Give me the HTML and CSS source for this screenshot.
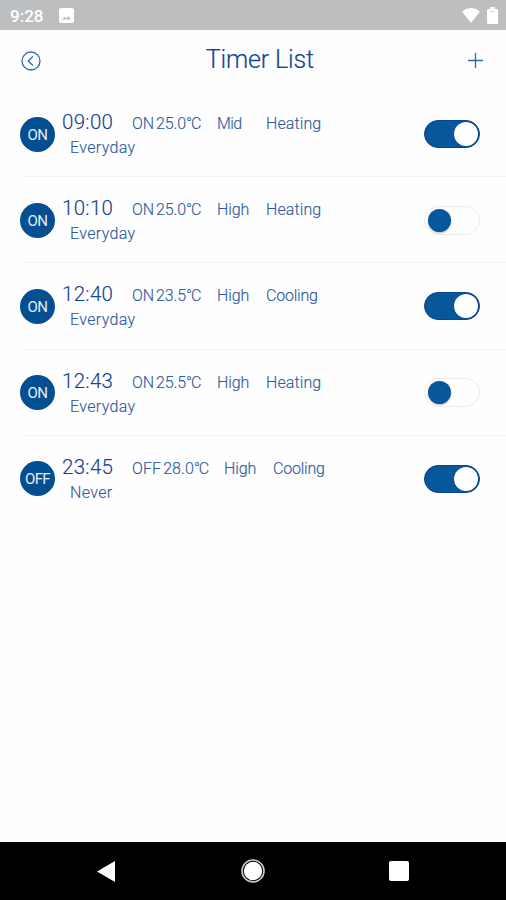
FILE: index.html
```html
<!DOCTYPE html>
<html lang="en">
<head>
<meta charset="utf-8">
<title>Timer List</title>
<link rel="stylesheet" href="styles.css">
</head>
<body>
<div class="status">
  <span class="clock">9:28</span>
  <svg class="photo" width="15" height="15" viewBox="0 0 15 15"><rect width="15" height="15" rx="2" fill="#fff"/><path d="M3 11.5L5.5 8.8L7.3 10.5L9.6 8L12.3 11.5Z" fill="#bdbec0"/></svg>
  <svg class="wifi" width="18" height="15" viewBox="0 0 18 15"><path d="M0 3.4Q9-3.3 18 3.4L9 15Z" fill="#fff"/></svg>
  <svg class="battery" width="11" height="17" viewBox="0 0 11 17"><path d="M3.2 0H7.8V2H9.5Q11 2 11 3.5V15.5Q11 17 9.5 17H1.5Q0 17 0 15.5V3.5Q0 2 1.5 2H3.2Z" fill="#fff"/><path d="M3 4.5H8" stroke="#d8d8d9"/></svg>
</div>
<header class="header">
  <svg width="20" height="20" viewBox="0 0 20 20" fill="none" stroke="#2e69a9" stroke-width="1.3"><circle cx="10" cy="10" r="9"/><path d="M12 5.6L7.2 10L12 14.4"/></svg>
  <h1 class="title">Timer List</h1>
  <svg width="15" height="15" viewBox="0 0 15 15" stroke="#2e69a9" stroke-width="1.3"><path d="M0 7.5H15M7.5 0V15"/></svg>
</header>
<main class="list">
  <div class="row"><span class="badge">ON</span><div class="info"><div class="line"><span class="time">09:00</span><span class="temp">ON<i></i>25.0<span class="unit">°C</span></span><span class="fan mid">Mid</span><span class="mode">Heating</span></div><div class="repeat">Everyday</div></div><span class="switch on"></span></div>
  <div class="row"><span class="badge">ON</span><div class="info"><div class="line"><span class="time">10:10</span><span class="temp">ON<i></i>25.0<span class="unit">°C</span></span><span class="fan">High</span><span class="mode">Heating</span></div><div class="repeat">Everyday</div></div><span class="switch"></span></div>
  <div class="row"><span class="badge">ON</span><div class="info"><div class="line"><span class="time">12:40</span><span class="temp">ON<i></i>23.5<span class="unit">°C</span></span><span class="fan">High</span><span class="mode cool">Cooling</span></div><div class="repeat">Everyday</div></div><span class="switch on"></span></div>
  <div class="row"><span class="badge">ON</span><div class="info"><div class="line"><span class="time">12:43</span><span class="temp">ON<i></i>25.5<span class="unit">°C</span></span><span class="fan">High</span><span class="mode">Heating</span></div><div class="repeat">Everyday</div></div><span class="switch"></span></div>
  <div class="row last"><span class="badge">OFF</span><div class="info"><div class="line"><span class="time">23:45</span><span class="temp wide">OFF<i></i>28.0<span class="unit">°C</span></span><span class="fan">High</span><span class="mode cool">Cooling</span></div><div class="repeat">Never</div></div><span class="switch on"></span></div>
</main>
<nav class="nav">
  <svg width="18" height="21" viewBox="0 0 18 21"><path d="M18 0V21L0 10.5Z" fill="#fff"/></svg>
  <svg width="24" height="24" viewBox="0 0 24 24"><circle cx="12" cy="12" r="11" fill="none" stroke="#ccc" stroke-width="1.6"/><circle cx="12" cy="12" r="9.2" fill="#fff"/></svg>
  <svg width="20" height="20" viewBox="0 0 20 20"><rect width="20" height="20" rx="2" fill="#fff"/></svg>
</nav>
</body>
</html>
```

FILE: styles.css
```css
* { box-sizing: border-box; }
body {
  margin: 0;
  height: 900px;
  display: flex;
  flex-direction: column;
  overflow: hidden;
  background: #fefefe;
  color: #2f5ba1;
  font-family: Roboto, "Noto Sans", sans-serif;
}
svg { display: block; flex: none; }
.status {
  height: 30px;
  flex: none;
  display: flex;
  align-items: center;
  padding: 0 8px 0 10px;
  background: #bdbec0;
}
.clock { width: 49px; padding-top: 1px; color: #fff; font-size: 17px; font-weight: 500; }
.photo { margin-top: 1px; }
.wifi { margin-left: auto; }
.battery { margin-left: 7px; }
.header {
  height: 61px;
  flex: none;
  display: flex;
  align-items: center;
  justify-content: space-between;
  padding: 0 22.5px 0 21px;
}
.title {
  margin: 0;
  padding: 0 0 2px 10px;
  font-size: 25px;
  font-weight: 300;
  line-height: 30px;
  letter-spacing: -0.15px;
  color: #164497;
  -webkit-text-stroke: 0.2px #164497;
}
.header svg:last-child { margin-bottom: 1px; }
.list { flex: 1; }
.row {
  height: 86.2px;
  display: flex;
  align-items: center;
  padding: 0 26.5px 0 20px;
  background: linear-gradient(#f3f3f4, #f3f3f4) 24px 100% / 100% 1px no-repeat;
}
.last { background-image: linear-gradient(#fafafa, #fafafa); }
.badge {
  width: 35px;
  height: 35px;
  flex: none;
  border-radius: 50%;
  background: #034f91;
  color: #e4edf6;
  font-size: 15px;
  line-height: 36px;
  letter-spacing: -0.6px;
  text-align: center;
}
.info { flex: 1; padding: 1.8px 0 0 7px; font-size: 16px; font-weight: 300; -webkit-text-stroke: 0.15px #2f5ba1; }
.line { display: flex; align-items: baseline; height: 25px; line-height: 25px; white-space: nowrap; }
.time { width: 70px; font-size: 20.5px; letter-spacing: 0.3px; color: #103c94; }
.temp { width: 85px; letter-spacing: -0.1px; }
.temp i { display: inline-block; width: 2px; }
.wide { width: 92px; letter-spacing: 0.1px; }
.unit { letter-spacing: -1.2px; }
.fan { width: 49px; letter-spacing: -0.1px; }
.mid { letter-spacing: -0.6px; }
.mode { letter-spacing: 0.1px; }
.cool { letter-spacing: -0.2px; }
.repeat { height: 25px; padding-left: 8px; line-height: 25px; letter-spacing: 0.35px; }
.switch {
  width: 56px;
  height: 29px;
  flex: none;
  padding: 2px 3px;
  border: 1px solid #ececed;
  border-radius: 15px;
}
.switch::before {
  content: "";
  display: block;
  width: 23px;
  height: 23px;
  border-radius: 50%;
  background: #07579b;
  box-shadow: 0 1px 2px #0004;
}
.on { height: 28px; padding: 1px 0; background: #07579b; border-color: #0a438f; }
.on::before { width: 24px; height: 24px; margin-left: 29px; background: #fff; box-shadow: 0 0 1px #002570; }
.nav {
  height: 58px;
  flex: none;
  display: grid;
  grid-template-columns: 18px 24px 20px;
  column-gap: 127px;
  align-items: center;
  padding-left: 97px;
  background: #000;
}
.nav svg:nth-child(2) { margin-left: -1px; }
.nav svg:nth-child(3) { margin-left: -4px; }
```
